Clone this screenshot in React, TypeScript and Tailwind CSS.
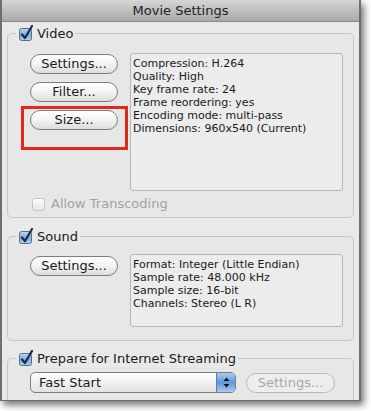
import type { ReactNode } from 'react'

const font = { fontFamily: '"DejaVu Sans", "Liberation Sans", sans-serif' }

function Check({ checked = true, disabled = false }: { checked?: boolean; disabled?: boolean }) {
  return (
    <svg width="15" height="16" viewBox="0 0 15 16" className="shrink-0">
      <defs>
        <linearGradient id="cb" x1="0" y1="0" x2="0" y2="1">
          <stop offset="0" stopColor="#bcd6f2" />
          <stop offset="0.5" stopColor="#7faee3" />
          <stop offset="1" stopColor="#a9cdf2" />
        </linearGradient>
        <linearGradient id="cbo" x1="0" y1="0" x2="0" y2="1">
          <stop offset="0" stopColor="#ffffff" />
          <stop offset="1" stopColor="#e4e4e4" />
        </linearGradient>
      </defs>
      <rect
        x="0.5"
        y="3.5"
        width="12"
        height="12"
        rx="2"
        fill={checked ? 'url(#cb)' : 'url(#cbo)'}
        stroke={disabled ? '#c4c4c4' : '#5b6f8a'}
      />
      {checked && (
        <path d="M3 9.5 L6 13 L13 1" fill="none" stroke="#1c2a44" strokeWidth="2.2" strokeLinecap="round" strokeLinejoin="round" />
      )}
    </svg>
  )
}

function Button({ children, disabled = false, w = 'w-[88px]' }: { children: ReactNode; disabled?: boolean; w?: string }) {
  return (
    <div
      className={`${w} flex h-[20px] items-center justify-center rounded-full border text-[13px] ${
        disabled
          ? 'border-[#b9b9b9] bg-[#eeeeee] text-[#a8a8a8]'
          : 'border-[#7d7d7d] bg-gradient-to-b from-white via-[#f3f3f3] to-[#dcdcdc] text-[#1a1a1a]'
      }`}
    >
      {children}
    </div>
  )
}

function Group({ label, children, cls }: { label: string; children: ReactNode; cls: string }) {
  return (
    <fieldset className={`mx-[5px] shrink-0 rounded-[5px] border border-[#c6c6c6] bg-[#e7e7e7] ${cls}`}>
      <legend className="ml-[8px] flex items-center gap-[3px] bg-[#e9e9e9] pr-[2px] pl-[3px] text-[13px] leading-[16px] text-[#1a1a1a]">
        <Check />
        <span className="pt-[2px]">{label}</span>
      </legend>
      {children}
    </fieldset>
  )
}

function Info({ lines, h }: { lines: string[]; h: string }) {
  return (
    <div className={`w-[213px] ${h} rounded-[3px] border border-[#b7b7b7] bg-[#ececec] px-[2px] pt-[3px] text-[11px] leading-[13px] text-[#1a1a1a]`}>
      {lines.map((l) => (
        <div key={l}>{l}</div>
      ))}
    </div>
  )
}

export default function App() {
  return (
    <div className="h-[411px] w-[371px] bg-white" style={font}>
      <div className="flex h-[401px] w-[361px] flex-col overflow-hidden border-x-2 border-b border-[#6e6e6e] bg-[#e9e9e9] shadow-[3px_4px_7px_rgba(0,0,0,0.55)]">
        <div className="flex h-[22px] shrink-0 items-center justify-center border-b border-[#8a8a8a] bg-gradient-to-b from-[#d6d6d6] to-[#a9a9a9] text-[13px] text-[#1e1e1e]">
          Movie Settings
        </div>

        <Group label="Video" cls="mt-[2px] h-[194px]">
          <div className="flex pt-[11px]">
            <div className="ml-[13px] flex w-[107px] flex-col">
              <div className="ml-[9px] mt-[1px]">
                <Button>Settings...</Button>
              </div>
              <div className="ml-[9px] mt-[8px]">
                <Button>Filter...</Button>
              </div>
              <div className="mt-[4px] h-[44px] border-[3px] border-[#e2271d] pt-[1px] pl-[6px]">
                <Button>Size...</Button>
              </div>
            </div>
            <div className="ml-[2px]">
              <Info
                h="h-[138px]"
                lines={[
                  'Compression: H.264',
                  'Quality: High',
                  'Key frame rate: 24',
                  'Frame reordering: yes',
                  'Encoding mode: multi-pass',
                  'Dimensions: 960x540 (Current)',
                ]}
              />
            </div>
          </div>
          <div className="ml-[24px] mt-[1px] flex items-center gap-[4px] text-[13px] text-[#a3a3a3]">
            <Check checked={false} disabled />
            <span className="pt-[2px]">Allow Transcoding</span>
          </div>
        </Group>

        <Group label="Sound" cls="mt-[9px] h-[114px]">
          <div className="flex pt-[9px]">
            <div className="ml-[22px] mt-[2px] w-[100px]">
              <Button>Settings...</Button>
            </div>
            <div>
              <Info
                h="h-[73px]"
                lines={[
                  'Format: Integer (Little Endian)',
                  'Sample rate: 48.000 kHz',
                  'Sample size: 16-bit',
                  'Channels: Stereo (L R)',
                ]}
              />
            </div>
          </div>
        </Group>

        <Group label="Prepare for Internet Streaming" cls="mt-[8px] h-[60px]">
          <div className="ml-[22px] flex items-center gap-[10px] pt-[5px]">
            <div className="flex h-[21px] w-[206px] items-center overflow-hidden rounded-[5px] border border-[#7d7d7d] bg-gradient-to-b from-white to-[#e2e2e2] text-[13px] text-[#1a1a1a]">
              <span className="flex-1 pl-[8px]">Fast Start</span>
              <div className="flex h-full w-[19px] flex-col items-center justify-center gap-[2px] border-l border-[#5f7ea8] bg-gradient-to-b from-[#a9cbf1] via-[#5e98de] to-[#a6cbf3]">
                <svg width="7" height="11" viewBox="0 0 7 11">
                  <path d="M3.5 0.5 L6.5 4 L0.5 4 Z" fill="#111" />
                  <path d="M3.5 10.5 L6.5 7 L0.5 7 Z" fill="#111" />
                </svg>
              </div>
            </div>
            <Button disabled w="w-[89px]">
              Settings...
            </Button>
          </div>
        </Group>
      </div>
    </div>
  )
}
